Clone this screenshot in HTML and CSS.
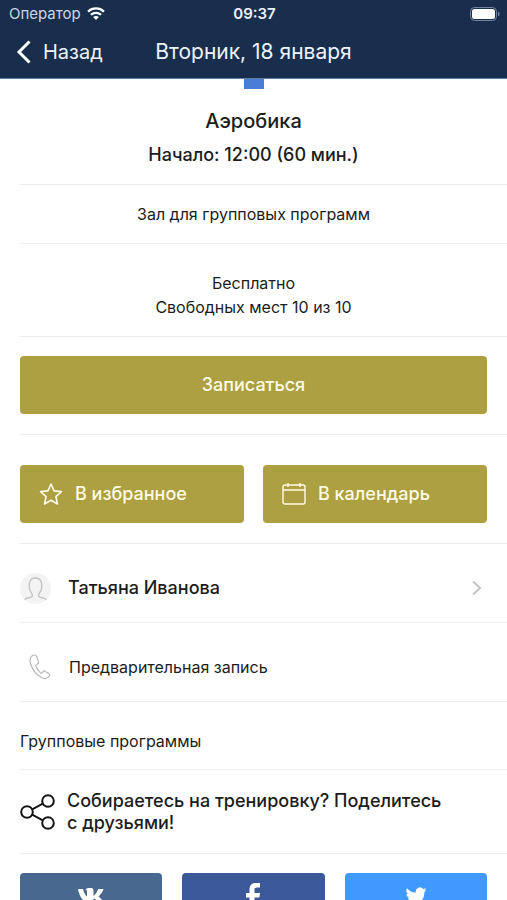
FILE: index.html
```html
<!DOCTYPE html>
<html lang="ru">
<head>
  <meta charset="utf-8">
  <meta name="viewport" content="width=device-width, initial-scale=1">
  <title>Вторник, 18 января</title>
  <link rel="stylesheet" href="styles.css">
</head>
<body>
  <div class="app">
    <header class="header">
      <div class="status">
        <div class="status-left">
          <span>Оператор</span>
          <svg class="wifi" viewBox="0 0 18 13" width="18" height="13" aria-hidden="true">
            <g fill="none" stroke="#fff" stroke-width="2.2">
              <path d="M1 4.6C5.4.4 12.6.4 17 4.6"/>
              <path d="M3.9 7.8c2.9-2.7 7.3-2.7 10.2 0"/>
            </g>
            <path fill="#fff" d="M9 13 6.1 10.100c1.700-1.400 4.100-1.400 5.800 0z"/>
          </svg>
        </div>
        <time class="clock">09:37</time>
        <div class="status-right">
          <svg viewBox="0 0 30 14" width="30" height="14" aria-hidden="true">
            <rect x=".5" y=".5" width="26" height="13" rx="4" fill="none" stroke="#7483a0"/>
            <rect x="2" y="2" width="23" height="10" rx="2.500" fill="#fff"/>
            <path d="M28 4.500c2 .8 2 4.200 0 5z" fill="#7483a0"/>
          </svg>
        </div>
      </div>
      <nav class="navbar">
        <a class="back" href="#">
          <svg viewBox="0 0 16 24" width="16" height="24" aria-hidden="true">
            <path d="M13.500 1.500 3 12l10.500 10.500" fill="none" stroke="#fff" stroke-width="3"/>
          </svg>
          <span>Назад</span>
        </a>
        <h1 class="title">Вторник, 18 января</h1>
      </nav>
    </header>

    <main class="content">
      <section class="hero row">
        <span class="marker"></span>
        <h2 class="hero-name">Аэробика</h2>
        <p class="hero-time">Начало: 12:00 (60 мин.)</p>
      </section>
      <section class="room row">Зал для групповых программ</section>
      <section class="price row">
        <p>Бесплатно</p>
        <p>Свободных мест 10 из 10</p>
      </section>
      <section class="signup row">
        <button class="btn btn-main" type="button">Записаться</button>
      </section>
      <section class="actions row">
        <button class="btn btn-icon" type="button">
          <svg viewBox="0 0 24 24" width="24" height="24" aria-hidden="true">
            <path d="m12 2 3.100 6.900 7.300.7-5.500 5 1.600 7.400L12 18.200 5.500 22l1.600-7.400-5.500-5 7.300-.7z" fill="none" stroke="#fffbe6" stroke-width="1.600" stroke-linejoin="round"/>
          </svg>
          <span>В избранное</span>
        </button>
        <button class="btn btn-icon" type="button">
          <svg viewBox="0 0 24 24" width="24" height="24" aria-hidden="true">
            <g fill="none" stroke="#fffbe6" stroke-width="1.400">
              <rect x="1" y="3" width="22" height="19" rx="2"/>
              <path d="M1 8h22M6 1v4M18 1v4"/>
            </g>
          </svg>
          <span>В календарь</span>
        </button>
      </section>
      <a class="list-item row" href="#">
        <span class="avatar">
          <svg viewBox="0 0 31 31" width="31" height="31" aria-hidden="true">
            <path d="M5 26.500c1-2.400 7.500-1 7.500-4 0-2-2.700-3.500-3.100-7.500C8.700 9 10.300 5 15.500 5s6.800 4 6.100 10c-.4 4-3.100 5.500-3.100 7.500 0 3 6.500 1.600 7.500 4" fill="none" stroke="#c4c4c4" stroke-width="1.400" stroke-linecap="round"/>
          </svg>
        </span>
        <span class="trainer">Татьяна Иванова</span>
        <svg viewBox="0 0 10 16" width="10" height="16" aria-hidden="true">
          <path d="m1 1.500 7 6.500-7 6.500" fill="none" stroke="#c4c4c4" stroke-width="2"/>
        </svg>
      </a>
      <section class="list-item row">
        <span class="phone">
          <svg viewBox="0 0 22 26" width="22" height="26" aria-hidden="true">
            <path d="M3.500 1.500C1 3 .5 6 1.500 9.500c2 6.500 6.500 12 12 14.500 3 1.200 5.500.2 7-2.300.4-.8.2-1.500-.5-2l-4-2.500c-.8-.5-1.500-.3-2 .4l-.8 1.100c-.4.500-1 .6-1.600.2C9.500 17 7.700 14.500 6.900 12c-.2-.7 0-1.200.6-1.500l1.200-.7c.8-.4 1-1.100.7-1.900L7.800 2.500C7.400 1.500 6.600 1 5.700 1c-.8 0-1.500.1-2.200.5z" fill="none" stroke="#b8b8b8" stroke-width="1.200" stroke-linejoin="round"/>
          </svg>
        </span>
        <span class="note">Предварительная запись</span>
      </section>
      <section class="group row">Групповые программы</section>
      <section class="share row">
        <svg viewBox="0 0 35 36" width="35" height="36" aria-hidden="true">
          <g fill="none" stroke="#151515" stroke-width="2">
            <circle cx="7" cy="18" r="5.800"/>
            <circle cx="28" cy="7" r="5.800"/>
            <circle cx="28" cy="29" r="5.800"/>
            <path d="m12.200 15.300 10.600-5.600M12.200 20.700l10.600 5.600"/>
          </g>
        </svg>
        <p>Собираетесь на тренировку? Поделитесь с&nbsp;друзьями!</p>
      </section>
      <section class="social">
        <button class="btn vk" type="button" aria-label="ВКонтакте">
          <svg viewBox="0 0 26 16" width="26" height="16" aria-hidden="true">
            <path d="M0 1h5c1 4 2.500 6.500 4 7.400V3.500C9 2.300 8.500 1.700 7.500 1.400 8.500.4 10 0 12 0c2.500 0 3.500.5 3.500 2.500V8C17.500 6.500 19 4 20.200 1H25.500C25 3.500 22.500 6.500 20.500 8.500 22.500 10 25 12.500 26 15.500h-5.500c-1-2.500-3-4.500-5-5v5H13C6.500 15.500 1.500 10 0 1z" fill="#fff"/>
          </svg>
        </button>
        <button class="btn facebook" type="button" aria-label="Facebook">
          <svg viewBox="0 0 16 26" width="16" height="26" aria-hidden="true">
            <path d="M4.500 26V14.500H1V10h3.500V6.500C4.500 2.500 6.500 0 10.500 0H15v4.500h-3c-2 0-2.500 1-2.500 2.500v3H15l-.6 4.500H9.500V26z" fill="#fff"/>
          </svg>
        </button>
        <button class="btn twitter" type="button" aria-label="Twitter">
          <svg viewBox="1 3 22 19" width="22" height="19" aria-hidden="true">
            <path d="M22.500 5.500c-.8.400-1.600.6-2.500.7.900-.5 1.600-1.400 1.900-2.400-.8.500-1.800.9-2.700 1.100a4.300 4.300 0 0 0-7.400 3.900c-3.600-.2-6.700-1.900-8.800-4.500a4.300 4.300 0 0 0 1.300 5.800c-.7 0-1.400-.2-1.900-.5v.1c0 2 1.500 3.800 3.400 4.200-.6.200-1.300.2-1.900.1.500 1.700 2.100 2.900 4 3a8.600 8.600 0 0 1-6.300 1.800A12.200 12.200 0 0 0 20.400 8c.8-.7 1.500-1.500 2.100-2.500z" fill="#fff"/>
          </svg>
        </button>
      </section>
    </main>
  </div>
</body>
</html>
```

FILE: styles.css
```css
* {
  box-sizing: border-box;
}

body,
h1,
h2,
p {
  margin: 0;
}

body {
  background: #fff;
  color: #1c1c1c;
  font-family: Inter, "Liberation Sans", sans-serif;
  font-size: 16px;
  line-height: 24px;
}

a {
  color: inherit;
  text-decoration: none;
}

svg {
  display: block;
  flex: none;
}

.app {
  display: flex;
  flex-direction: column;
  height: 100vh;
}

.header {
  flex: none;
  padding-bottom: 9px;
  background: #192e4d;
  color: #eef3fa;
  border-bottom: 1px solid #5f7fa3;
}

.status {
  display: grid;
  grid-template-columns: 1fr auto 1fr;
  align-items: center;
  height: 27px;
  padding: 0 7px 0 9px;
  font-size: 15px;
}

.status-left {
  display: flex;
  align-items: center;
  gap: 6px;
  color: #cdd6e3;
}

.clock {
  font-weight: 600;
}

.status-right {
  display: flex;
  justify-content: flex-end;
}

.navbar {
  display: grid;
  grid-template-columns: 1fr auto 1fr;
  align-items: center;
  height: 42px;
  padding: 8px 16px 0;
  font-size: 20px;
}

.navbar,
.title {
  line-height: 34px;
}

.back {
  display: flex;
  align-items: center;
  gap: 11px;
}

.title {
  font-size: 21px;
  font-weight: 400;
}

.content {
  flex: 1;
  min-height: 0;
  overflow-y: auto;
  scrollbar-width: none;
  padding-left: 20px;
}

.row {
  border-bottom: 1px solid #eee;
  padding-right: 20px;
}

.hero,
.room,
.price {
  text-align: center;
}

.hero {
  display: flex;
  flex-direction: column;
  align-items: center;
  padding-bottom: 13px;
  line-height: 33px;
}

.marker {
  width: 20px;
  height: 10px;
  margin-bottom: 16px;
  background: #4a7dd3;
}

.hero-name {
  font-size: 20px;
  font-weight: 500;
}

.hero-time {
  font-size: 18px;
  font-weight: 500;
}

.room {
  padding-top: 17px;
  padding-bottom: 17px;
}

.price {
  padding-top: 27px;
  padding-bottom: 17px;
}

.btn {
  display: flex;
  align-items: center;
  justify-content: center;
  height: 58px;
  padding: 0 18px;
  border: 0;
  border-radius: 4px;
  background: #aca042;
  color: #fffbe6;
  font: 500 18px/24px Inter, "Liberation Sans", sans-serif;
}

.signup {
  padding-top: 19px;
  padding-bottom: 20px;
}

.btn-main {
  width: 100%;
}

.actions {
  display: grid;
  grid-template-columns: 1fr 1fr;
  gap: 19px;
  padding-top: 30px;
  padding-bottom: 20px;
}

.btn-icon {
  justify-content: flex-start;
  gap: 12px;
  padding: 0 19px;
}

.list-item {
  display: flex;
  align-items: center;
  min-height: 79px;
  padding-top: 10px;
}

.list-item svg:last-child {
  margin-left: auto;
}

.avatar {
  width: 31px;
  height: 31px;
  border-radius: 50%;
  background: #f3f3f3;
}

.trainer {
  margin-left: 17px;
  margin-right: auto;
  font-size: 18px;
  font-weight: 500;
}

.list-item > svg {
  margin-right: 5px;
}

.phone {
  padding: 0 9px;
}

.note {
  margin-left: 9px;
}

.group {
  padding-top: 27px;
  padding-bottom: 16px;
}

.share {
  display: flex;
  align-items: center;
  gap: 12px;
  padding-top: 20px;
  padding-bottom: 19px;
  font-size: 18px;
  font-weight: 500;
  line-height: 22px;
}

.social {
  display: grid;
  grid-template-columns: repeat(3, 1fr);
  gap: 20px;
  padding: 19px 20px 20px 0;
}

.social .btn {
  height: 46px;
}

.vk {
  background: #48688f;
}

.facebook {
  background: #3b5998;
}

.twitter {
  background: #4099ff;
}
```
